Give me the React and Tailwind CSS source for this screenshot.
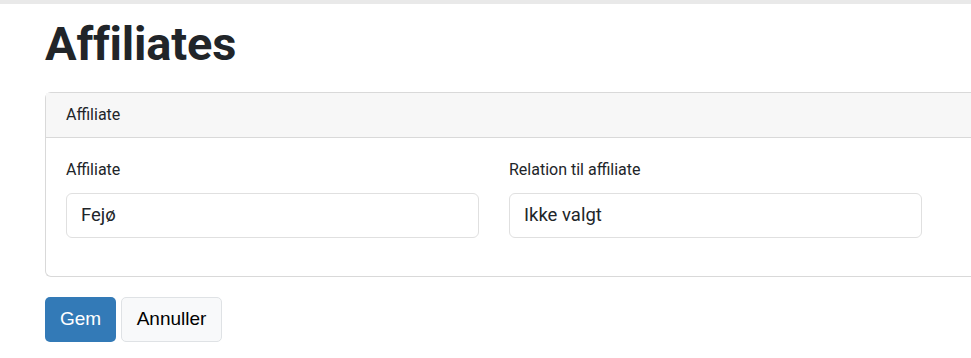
export default function App() {
  return (
    <div className="w-[971px] h-[358px] overflow-hidden bg-white font-['Roboto',sans-serif] text-[#212529]">
      <div className="h-1 bg-[#e9e9e9]" />
      <div className="pl-[45px]">
        <h1 className="mt-[12px] text-[47px] font-bold leading-[56px] tracking-[-0.2px]">Affiliates</h1>
        <div className="mt-[20px] w-[960px] rounded-l-[6px] border border-r-0 border-[#d9d9d9]">
          <div className="h-[45px] bg-[#f7f7f7] border-b border-[#d9d9d9] px-[20px] flex items-center text-[16px]">
            Affiliate
          </div>
          <div className="px-[20px] pt-[22px] pb-[38px] flex gap-[30px]">
            <div className="w-[413px]">
              <label className="block text-[16px] leading-[20px] mb-[13px]">Affiliate</label>
              <div className="h-[45px] rounded-[6px] border border-[#e0e0e0] px-[14px] flex items-center text-[18.5px]">
                Fejø
              </div>
            </div>
            <div className="w-[413px]">
              <label className="block text-[16px] leading-[20px] mb-[13px]">Relation til affiliate</label>
              <div className="h-[45px] rounded-[6px] border border-[#e0e0e0] px-[14px] flex items-center text-[18.5px]">
                Ikke valgt
              </div>
            </div>
          </div>
        </div>
        <div className="mt-[20px] flex gap-[5px] font-['Liberation_Sans',Arial,sans-serif] text-[19px]">
          <button className="h-[45px] w-[71px] rounded-[5px] bg-[#337ab7] text-white">Gem</button>
          <button className="h-[45px] w-[101px] rounded-[5px] bg-[#f8f9fa] border border-[#dfe2e5] text-black">Annuller</button>
        </div>
      </div>
    </div>
  );
}
